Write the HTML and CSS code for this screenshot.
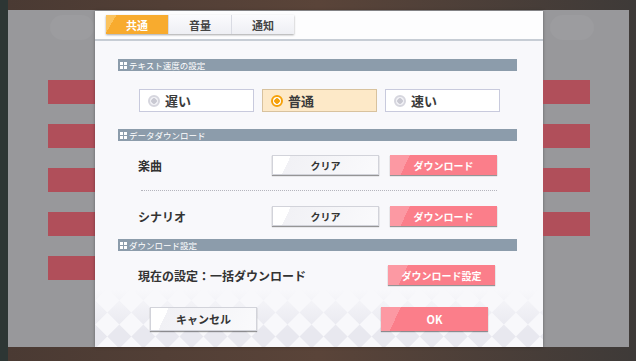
FILE: index.html
```html
<!DOCTYPE html>
<html lang="ja">
<head>
    <meta charset="UTF-8">
    <title>設定</title>
    <link rel="stylesheet" href="styles.css">
</head>
<body>
    <div class="scene">
        <div class="side side-left">
            <div class="pill"></div>
            <div class="side-btn"></div>
            <div class="side-btn"></div>
            <div class="side-btn"></div>
            <div class="side-btn"></div>
            <div class="side-btn"></div>
        </div>

        <div class="dialog">
            <div class="dialog-head">
                <div class="tabs">
                    <div class="tab active">共通</div>
                    <div class="tab">音量</div>
                    <div class="tab">通知</div>
                </div>
            </div>

            <div class="dialog-body">
                <div class="section-title">
                    <svg class="grid-icon" viewBox="0 0 7 7"><rect x="0" y="0" width="3" height="3"/><rect x="4" y="0" width="3" height="3"/><rect x="0" y="4" width="3" height="3"/><rect x="4" y="4" width="3" height="3"/></svg>
                    テキスト速度の設定
                </div>
                <div class="speed-row">
                    <div class="radio"><span class="dot"></span>遅い</div>
                    <div class="radio selected"><span class="dot"></span>普通</div>
                    <div class="radio"><span class="dot"></span>速い</div>
                </div>

                <div class="section-title">
                    <svg class="grid-icon" viewBox="0 0 7 7"><rect x="0" y="0" width="3" height="3"/><rect x="4" y="0" width="3" height="3"/><rect x="0" y="4" width="3" height="3"/><rect x="4" y="4" width="3" height="3"/></svg>
                    データダウンロード
                </div>
                <div class="data-row first">
                    <div class="row-label">楽曲</div>
                    <div class="btn btn-white">クリア</div>
                    <div class="btn btn-pink">ダウンロード</div>
                </div>
                <div class="divider"></div>
                <div class="data-row">
                    <div class="row-label">シナリオ</div>
                    <div class="btn btn-white">クリア</div>
                    <div class="btn btn-pink">ダウンロード</div>
                </div>

                <div class="section-title">
                    <svg class="grid-icon" viewBox="0 0 7 7"><rect x="0" y="0" width="3" height="3"/><rect x="4" y="0" width="3" height="3"/><rect x="0" y="4" width="3" height="3"/><rect x="4" y="4" width="3" height="3"/></svg>
                    ダウンロード設定
                </div>
                <div class="data-row current">
                    <div class="row-label">現在の設定：一括ダウンロード</div>
                    <div class="btn btn-pink">ダウンロード設定</div>
                </div>
            </div>

            <div class="dialog-foot">
                <div class="btn btn-white btn-big">キャンセル</div>
                <div class="btn btn-pink btn-big">OK</div>
            </div>
        </div>

        <div class="side side-right">
            <div class="pill"></div>
            <div class="side-btn"></div>
            <div class="side-btn"></div>
            <div class="side-btn"></div>
            <div class="side-btn"></div>
        </div>
    </div>
</body>
</html>
```

FILE: styles.css
```css
* {
    margin: 0;
    padding: 0;
    box-sizing: border-box;
}

body {
    width: 636px;
    height: 361px;
    overflow: hidden;
    padding: 10px 7px 0 8px;
    font-family: "Noto Sans CJK JP", "Noto Sans", sans-serif;
    color: #333;
    background: linear-gradient(90deg, #2d3634 0, #2d3634 8px, #4a3a33 8px, #5a4439 50%, #3e3a38 100%);
}

.scene {
    display: flex;
    height: 337px;
    background-color: #98989b; /* dimmed panel */
}

.side {
    width: 87px;
    display: flex;
    flex-direction: column;
    gap: 20px;
}

.side-left {
    padding-left: 40px;
}

.side-right {
    width: 86px;
    padding-right: 39px;
}

.pill {
    height: 25px;
    width: 44px;
    margin-top: 5px;
    margin-bottom: 20px;
    border-radius: 13px;
    background-color: #9c9c9f;
}

.side-left .pill {
    margin-left: 2px;
}

.side-right .pill {
    margin-left: 7px;
}

.side-btn {
    height: 24px;
    background-color: #b04f5a;
}

/* dialog */

.dialog {
    width: 448px;
    margin-top: 1px;
    background-color: #f8f8fb;
    box-shadow: 0 0 3px rgba(0, 0, 0, 0.35);
    display: flex;
    flex-direction: column;
}

.dialog-head {
    height: 30px;
    padding: 4px 11px 0;
    background-color: #fdfdfe;
    border-bottom: 2px solid #c7cdd5;
}

.tabs {
    display: flex;
    width: 188px;
    height: 19px;
    box-shadow: 0 1px 2px rgba(0, 0, 0, 0.35);
}

.tab {
    flex: 1;
    display: flex;
    align-items: center;
    justify-content: center;
    font-size: 11px;
    font-weight: 700;
    color: #444;
    background: linear-gradient(180deg, #fbfbfd, #eeeff4);
    border-left: 1px solid #d9dbe3;
}

.tab.active {
    color: #fff;
    border-left: none;
    background: linear-gradient(120deg, #fbc35e 0, #fbc35e 9px, #f8ab2e 9px);
}

.dialog-body {
    flex: 1;
    padding: 18px 26px 0 23px;
}

.section-title {
    height: 12px;
    display: flex;
    align-items: center;
    gap: 2px;
    padding-left: 2px;
    font-size: 8.5px;
    line-height: 1;
    color: #fff;
    background-color: #8c9cab;
}

.grid-icon {
    width: 7px;
    height: 7px;
    fill: #fff;
}

.speed-row {
    display: flex;
    gap: 8px;
    margin: 18px 0 17px 21px;
}

.radio {
    width: 115px;
    height: 23px;
    display: flex;
    align-items: center;
    gap: 5px;
    padding-left: 8px;
    font-size: 13px;
    font-weight: 700;
    color: #3a3a3a;
    background-color: #fff;
    border: 1px solid #c8cadd;
}

.radio.selected {
    background-color: #fde9c8;
    border-color: #d8c29e;
}

.dot {
    flex-shrink: 0;
    width: 12px;
    height: 12px;
    border-radius: 50%;
    border: 2px solid #d6d6de;
    background: radial-gradient(circle, #c9c9d2 0, #c9c9d2 2.5px, #f2f2f6 3px);
}

.radio.selected .dot {
    border-color: #f5a10a;
    background: radial-gradient(circle, #f5a10a 0, #f5a10a 2.5px, #fff 3px);
}

.data-row {
    display: flex;
    align-items: center;
    gap: 11px;
    padding: 0 20px 0 20px;
}

.data-row.first {
    margin-top: 14px;
}

.data-row.current {
    margin-top: 14px;
    padding-right: 22px;
}

.data-row + .section-title {
    margin-top: 13px;
}

.row-label {
    flex: 1;
    font-size: 12px;
    font-weight: 700;
    color: #333;
}

.divider {
    margin: 15px 20px 15px 23px;
    border-top: 1px dotted #b5b5bd;
}

.btn {
    width: 107px;
    height: 20px;
    display: flex;
    align-items: center;
    justify-content: center;
    font-size: 10px;
    font-weight: 700;
    box-shadow: 0 1px 1px rgba(0, 0, 0, 0.4);
}

.btn-white {
    color: #333;
    border: 1px solid #d2d3da;
    background: linear-gradient(115deg, #ffffff 0, #ffffff 16px, #f1f1f5 16px, #fafafc 100%);
}

.btn-pink {
    color: #fff;
    background: linear-gradient(115deg, #fc99a3 0, #fc99a3 18px, #fb7e8a 18px);
}

.dialog-foot {
    position: relative;
    overflow: hidden;
    height: 57px;
    display: flex;
    justify-content: space-between;
    align-items: flex-start;
    padding: 17px 55px 0;
}

/* faint diamond pattern: a checkerboard turned 45deg */
.dialog-foot::before {
    content: "";
    position: absolute;
    left: -100px;
    right: -100px;
    top: -200px;
    bottom: -200px;
    background: repeating-conic-gradient(#e8e8ef 0 25%, transparent 0 50%) 0 0 / 34px 34px;
    transform: rotate(45deg);
}

/* fade the pattern out towards the top */
.dialog-foot::after {
    content: "";
    position: absolute;
    inset: 0;
    background: linear-gradient(180deg, #f8f8fb 0, rgba(248, 248, 251, 0) 70%);
}

.btn-big {
    position: relative;
    z-index: 1;
    height: 24px;
    font-size: 11px;
}
```
